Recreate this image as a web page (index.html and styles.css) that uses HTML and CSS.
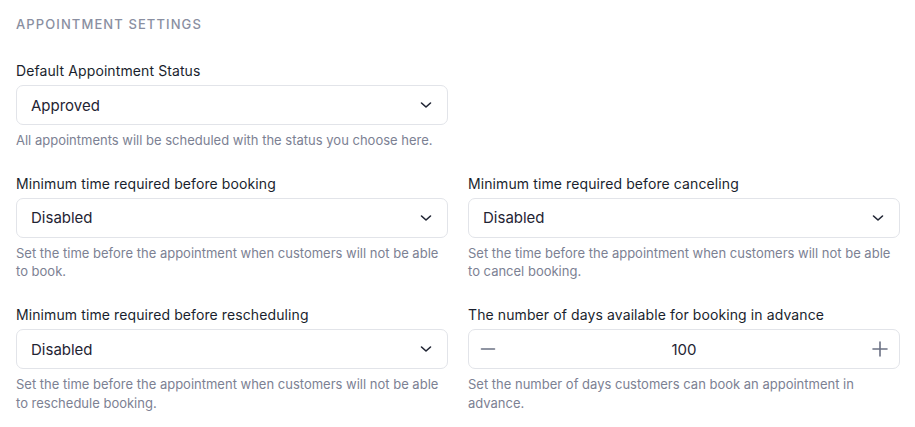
FILE: index.html
```html
<!DOCTYPE html>
<html lang="en">
<head>
<meta charset="utf-8">
<title>Appointment Settings</title>
<link rel="stylesheet" href="styles.css">
</head>
<body>
<div class="page">
  <h2 class="title">Appointment Settings</h2>

  <div class="field first">
    <div class="label">Default Appointment Status</div>
    <div class="select">
      <span class="value">Approved</span>
      <svg class="chev" width="12" height="8" viewBox="0 0 12 8"><path d="M1.5 2 L6 6 L10.5 2" fill="none" stroke="#1f2433" stroke-width="1.6" stroke-linecap="round" stroke-linejoin="round"/></svg>
    </div>
    <div class="help">All appointments will be scheduled with the status you choose here.</div>
  </div>

  <div class="grid">
    <div class="field">
      <div class="label">Minimum time required before booking</div>
      <div class="select">
        <span class="value">Disabled</span>
        <svg class="chev" width="12" height="8" viewBox="0 0 12 8"><path d="M1.5 2 L6 6 L10.5 2" fill="none" stroke="#1f2433" stroke-width="1.6" stroke-linecap="round" stroke-linejoin="round"/></svg>
      </div>
      <div class="help">Set the time before the appointment when customers will not be able to book.</div>
    </div>
    <div class="field">
      <div class="label">Minimum time required before canceling</div>
      <div class="select">
        <span class="value">Disabled</span>
        <svg class="chev" width="12" height="8" viewBox="0 0 12 8"><path d="M1.5 2 L6 6 L10.5 2" fill="none" stroke="#1f2433" stroke-width="1.6" stroke-linecap="round" stroke-linejoin="round"/></svg>
      </div>
      <div class="help">Set the time before the appointment when customers will not be able to cancel booking.</div>
    </div>
    <div class="field">
      <div class="label">Minimum time required before rescheduling</div>
      <div class="select">
        <span class="value">Disabled</span>
        <svg class="chev" width="12" height="8" viewBox="0 0 12 8"><path d="M1.5 2 L6 6 L10.5 2" fill="none" stroke="#1f2433" stroke-width="1.6" stroke-linecap="round" stroke-linejoin="round"/></svg>
      </div>
      <div class="help">Set the time before the appointment when customers will not be able to reschedule booking.</div>
    </div>
    <div class="field">
      <div class="label">The number of days available for booking in advance</div>
      <div class="stepper">
        <svg class="step" width="16" height="16" viewBox="0 0 16 16"><path d="M1.5 8 H14.5" stroke="#6b7184" stroke-width="1.6" stroke-linecap="round"/></svg>
        <span class="num">100</span>
        <svg class="step" width="16" height="16" viewBox="0 0 16 16"><path d="M1 8 H15 M8 1 V15" stroke="#6b7184" stroke-width="1.6" stroke-linecap="round"/></svg>
      </div>
      <div class="help">Set the number of days customers can book an appointment in advance.</div>
    </div>
  </div>
</div>
</body>
</html>
```

FILE: styles.css
```css
* { box-sizing: border-box; }
html, body { margin: 0; padding: 0; background: #ffffff; }
body {
  font-family: Inter, "Noto Sans", sans-serif;
  color: #1f2433;
}
.page {
  width: 900px;
  padding: 14px 0 0 16px;
}
.title {
  margin: 0 0 27px 0;
  font-size: 13px;
  line-height: 20px;
  font-weight: 500;
  text-transform: uppercase;
  letter-spacing: 1.1px;
  color: #8a8fa1;
}
.field.first { width: 432px; margin-bottom: 24px; }
.grid {
  display: grid;
  grid-template-columns: 432px 432px;
  column-gap: 20px;
  row-gap: 24.5px;
}
.label {
  font-size: 14px;
  line-height: 20px;
  font-weight: 400;
  letter-spacing: 0.1px;
  color: #1a1f2e;
  margin-bottom: 4px;
}
.select, .stepper {
  height: 40px;
  border: 1px solid #e2e4e9;
  border-radius: 7px;
  display: flex;
  align-items: center;
  background: #fff;
}
.select {
  justify-content: space-between;
  padding: 0 15px 0 14px;
}
.value, .num {
  font-size: 15px;
  color: #1f2433;
}
.stepper {
  justify-content: space-between;
  padding: 0 11px 0 11px;
}
.chev { display: block; }
.step { display: block; }
.help {
  margin-top: 6px;
  font-size: 13px;
  line-height: 18.5px;
  color: #7c8193;
}
```
